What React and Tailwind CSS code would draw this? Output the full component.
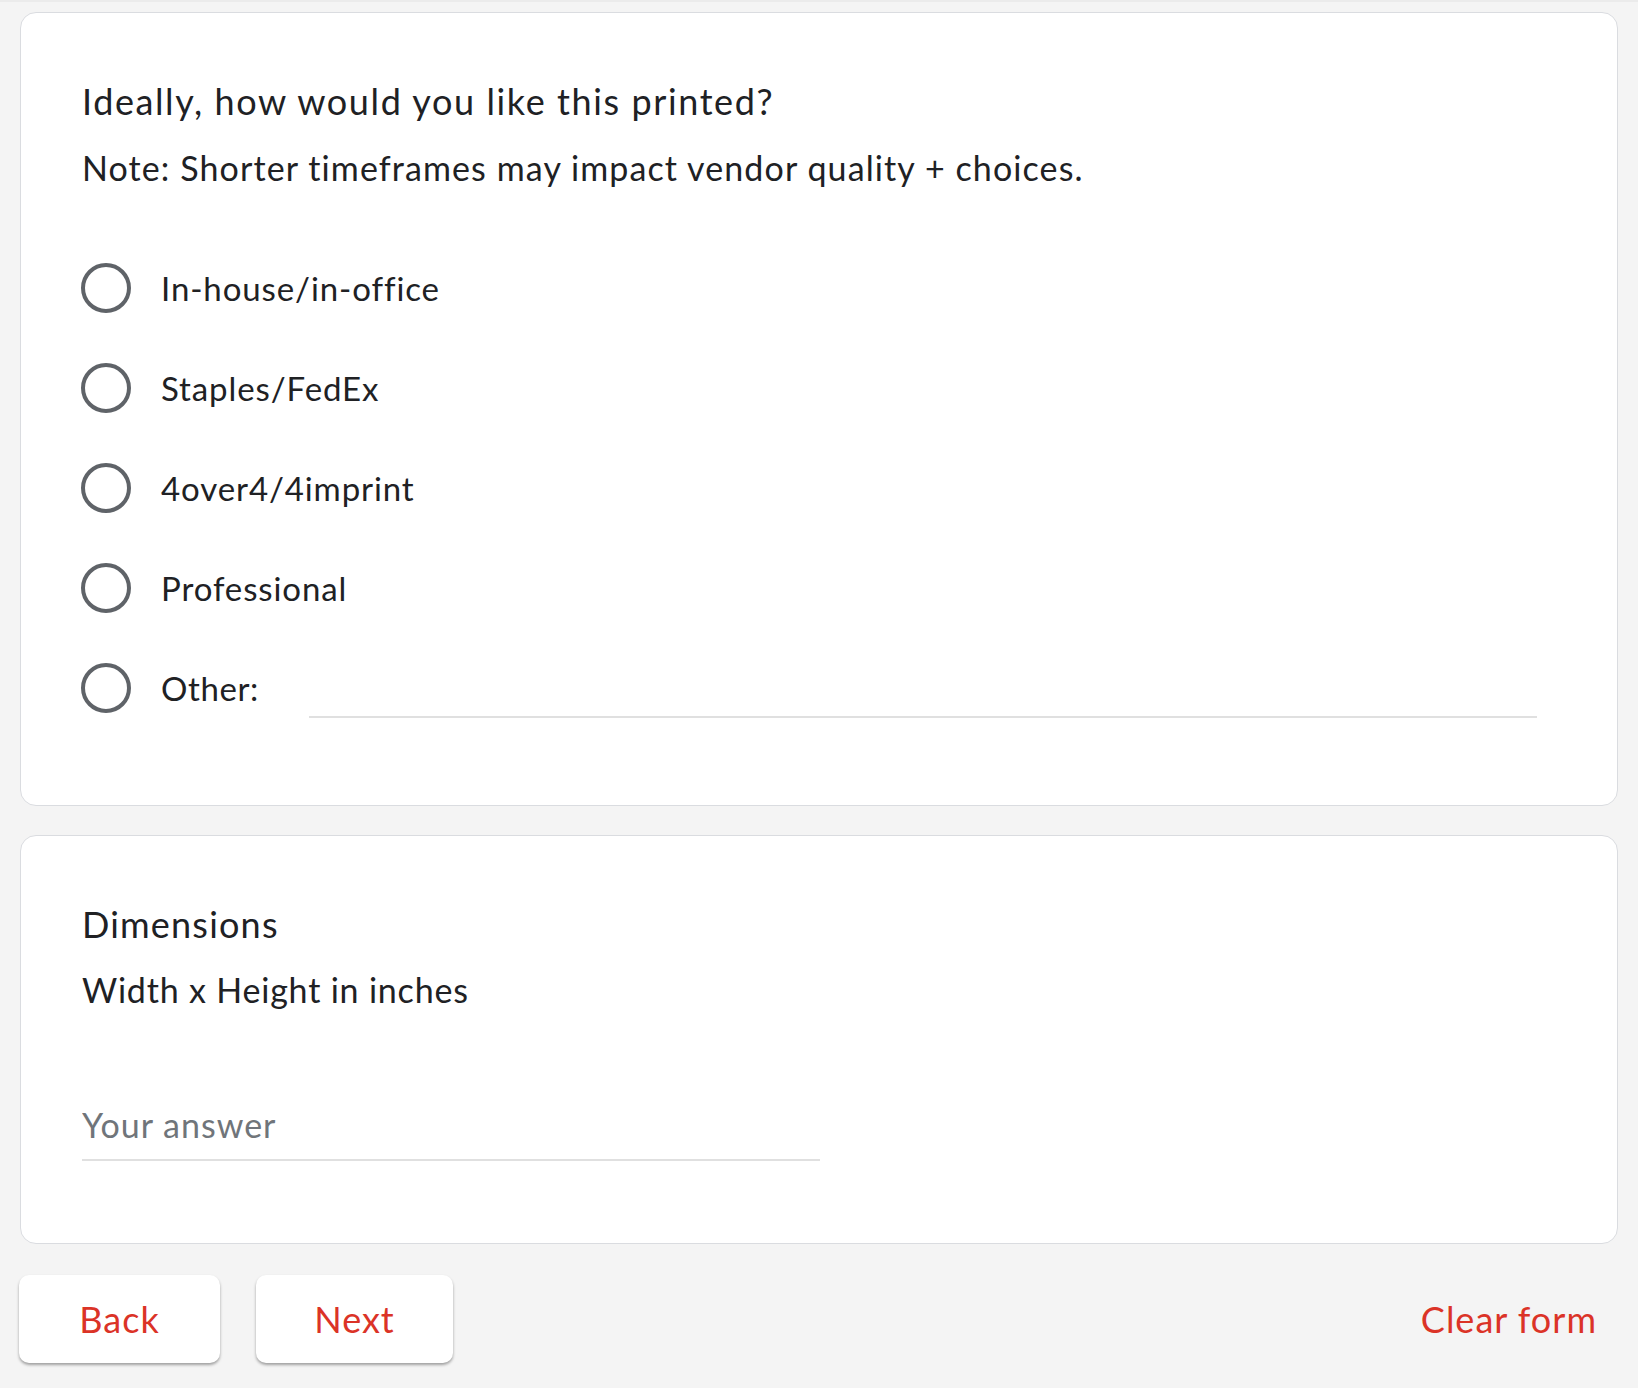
import React, { useState } from 'react';

const OPTIONS = ['In-house/in-office', 'Staples/FedEx', '4over4/4imprint', 'Professional'];

const Radio = ({ checked, onClick }) => (
  <button
    type="button"
    onClick={onClick}
    className="-ml-px w-[50px] h-[50px] shrink-0 rounded-full border-[4px] border-[#5f6368] flex items-center justify-center"
  >
    {checked && <span className="w-[24px] h-[24px] rounded-full bg-[#5f6368]" />}
  </button>
);

const App = () => {
  const [choice, setChoice] = useState(null);
  const [other, setOther] = useState('');
  const [dims, setDims] = useState('');

  const clearForm = () => {
    setChoice(null);
    setOther('');
    setDims('');
  };

  return (
    <div className="min-h-screen bg-[#f4f4f4] text-[#202124]" style={{ fontFamily: 'Lato, "Open Sans", sans-serif' }}>
      <div className="h-[2px] bg-[#ebebeb]" />
      <div className="px-[20px] pt-[10px] pb-[25px]">
        {/* Question: printing */}
        <div className="bg-white border border-[#dadce0] rounded-[16px] pt-[64px] pb-[67px] pl-[61px] pr-[80px]">
          <h2 className="text-[36px] leading-[48px] tracking-[1.6px]">Ideally, how would you like this printed?</h2>
          <p className="mt-[21px] text-[34px] leading-[44px] tracking-[1.1px]">Note: Shorter timeframes may impact vendor quality + choices.</p>
          <div className="mt-[48px]">
            {OPTIONS.map((opt) => (
              <div key={opt} className="h-[100px] flex items-center">
                <Radio checked={choice === opt} onClick={() => setChoice(opt)} />
                <span className="ml-[30px] text-[33px] leading-[44px] tracking-[0.9px]">{opt}</span>
              </div>
            ))}
            <div className="h-[100px] flex items-center">
              <Radio checked={choice === 'other'} onClick={() => setChoice('other')} />
              <span className="ml-[30px] text-[33px] leading-[44px] tracking-[0.6px]">Other:</span>
              <input
                value={other}
                onChange={(e) => { setOther(e.target.value); setChoice('other'); }}
                className="ml-[50px] flex-1 self-start mt-[30px] h-[50px] text-[33px] bg-transparent border-b-2 border-[#e0e0e0] outline-none"
              />
            </div>
          </div>
        </div>

        {/* Question: dimensions */}
        <div className="mt-[29px] bg-white border border-[#dadce0] rounded-[16px] pt-[64px] pb-[82px] pl-[61px] pr-[80px]">
          <h2 className="text-[36px] leading-[48px] tracking-[1.2px]">Dimensions</h2>
          <p className="mt-[20px] text-[34px] leading-[44px] tracking-[0.8px]">Width x Height in inches</p>
          <input
            value={dims}
            onChange={(e) => setDims(e.target.value)}
            placeholder="Your answer"
            className="mt-[90px] block w-[738px] h-[59px] pb-[13px] text-[34px] leading-[44px] tracking-[1px] bg-transparent border-b-2 border-[#e0e0e0] outline-none placeholder:text-[#70757a]"
          />
        </div>

        {/* Navigation */}
        <div className="mt-[31px] flex items-center">
          <button className="-ml-px w-[201px] h-[88px] bg-white rounded-[10px] shadow-[0_2px_3px_rgba(0,0,0,0.35)] text-[#db3327] text-[36px] tracking-[1px]">
            Back
          </button>
          <button className="ml-[36px] w-[197px] h-[88px] bg-white rounded-[10px] shadow-[0_2px_3px_rgba(0,0,0,0.35)] text-[#db3327] text-[36px] tracking-[1px]">
            Next
          </button>
          <button onClick={clearForm} className="ml-auto mr-[21px] text-[#db3327] text-[36px] leading-[48px] tracking-[1px]">
            Clear form
          </button>
        </div>
      </div>
    </div>
  );
};

export default App;
